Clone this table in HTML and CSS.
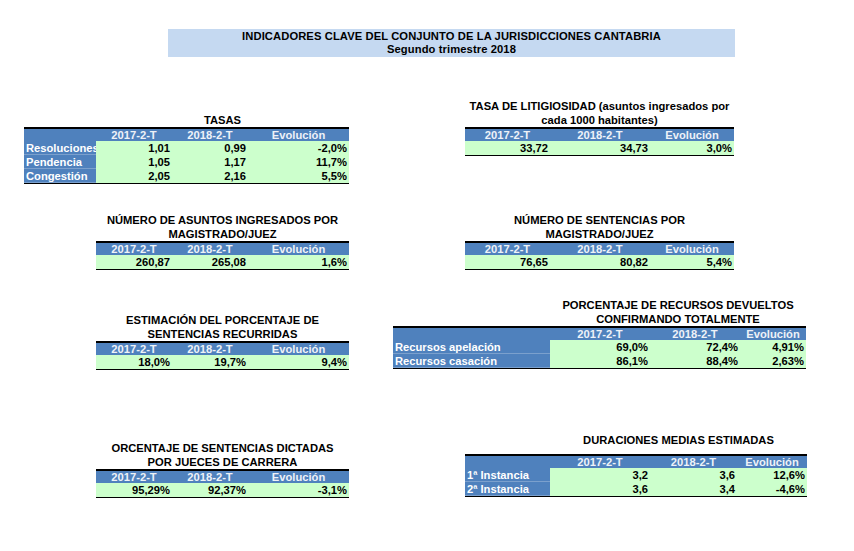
FILE: index.html
```html
<!DOCTYPE html>
<html lang="es">
<head>
<meta charset="utf-8">
<title>Indicadores clave Cantabria</title>
<link rel="stylesheet" href="styles.css">
</head>
<body>
<div class="page">
  <div class="banner">
    <div>INDICADORES CLAVE DEL CONJUNTO DE LA JURISDICCIONES CANTABRIA</div>
    <div>Segundo trimestre 2018</div>
  </div>

  <div class="sec sec-a">
    <div class="panel left-wide mt-tasas">
      <div class="title with-label-72">TASAS</div>
      <table class="grid w-tasas">
        <colgroup><col class="c72"><col class="c76"><col class="c76"><col class="c101"></colgroup>
        <tr><th></th><th>2017-2-T</th><th>2018-2-T</th><th>Evolución</th></tr>
        <tr><td class="lab">Resoluciones</td><td>1,01</td><td>0,99</td><td>-2,0%</td></tr>
        <tr><td class="lab">Pendencia</td><td>1,05</td><td>1,17</td><td>11,7%</td></tr>
        <tr class="last"><td class="lab">Congestión</td><td>2,05</td><td>2,16</td><td>5,5%</td></tr>
      </table>
    </div>
    <div class="panel right-std mt-litig">
      <div class="title">TASA DE LITIGIOSIDAD (asuntos ingresados por<br>cada 1000 habitantes)</div>
      <table class="grid w-right">
        <colgroup><col class="c85"><col class="c100"><col class="c84"></colgroup>
        <tr><th>2017-2-T</th><th>2018-2-T</th><th>Evolución</th></tr>
        <tr class="last"><td>33,72</td><td>34,73</td><td>3,0%</td></tr>
      </table>
    </div>
  </div>

  <div class="sec sec-b">
    <div class="panel left-std mt-b">
      <div class="title">NÚMERO DE ASUNTOS INGRESADOS POR<br>MAGISTRADO/JUEZ</div>
      <table class="grid w-left">
        <colgroup><col class="c76"><col class="c76"><col class="c101"></colgroup>
        <tr><th>2017-2-T</th><th>2018-2-T</th><th>Evolución</th></tr>
        <tr class="last"><td>260,87</td><td>265,08</td><td>1,6%</td></tr>
      </table>
    </div>
    <div class="panel right-std mt-b">
      <div class="title">NÚMERO DE SENTENCIAS POR<br>MAGISTRADO/JUEZ</div>
      <table class="grid w-right">
        <colgroup><col class="c85"><col class="c100"><col class="c84"></colgroup>
        <tr><th>2017-2-T</th><th>2018-2-T</th><th>Evolución</th></tr>
        <tr class="last"><td>76,65</td><td>80,82</td><td>5,4%</td></tr>
      </table>
    </div>
  </div>

  <div class="sec sec-c">
    <div class="panel left-std mt-estim">
      <div class="title">ESTIMACIÓN DEL PORCENTAJE DE<br>SENTENCIAS RECURRIDAS</div>
      <table class="grid w-left">
        <colgroup><col class="c76"><col class="c76"><col class="c101"></colgroup>
        <tr><th>2017-2-T</th><th>2018-2-T</th><th>Evolución</th></tr>
        <tr class="last"><td>18,0%</td><td>19,7%</td><td>9,4%</td></tr>
      </table>
    </div>
    <div class="panel right-wide mt-recursos">
      <div class="title with-label-157">PORCENTAJE DE RECURSOS DEVUELTOS<br>CONFIRMANDO TOTALMENTE</div>
      <table class="grid w-recursos">
        <colgroup><col class="c157"><col class="c100"><col class="c90"><col class="c66"></colgroup>
        <tr><th></th><th>2017-2-T</th><th>2018-2-T</th><th>Evolución</th></tr>
        <tr><td class="lab">Recursos apelación</td><td>69,0%</td><td>72,4%</td><td>4,91%</td></tr>
        <tr class="last"><td class="lab">Recursos casación</td><td>86,1%</td><td>88,4%</td><td>2,63%</td></tr>
      </table>
    </div>
  </div>

  <div class="sec sec-d">
    <div class="panel left-std mt-orc">
      <div class="title">ORCENTAJE DE SENTENCIAS DICTADAS<br>POR JUECES DE CARRERA</div>
      <table class="grid w-left">
        <colgroup><col class="c76"><col class="c76"><col class="c101"></colgroup>
        <tr><th>2017-2-T</th><th>2018-2-T</th><th>Evolución</th></tr>
        <tr class="last"><td>95,29%</td><td>92,37%</td><td>-3,1%</td></tr>
      </table>
    </div>
    <div class="panel right-std mt-dur">
      <div class="title with-label-85 gap-below">DURACIONES MEDIAS ESTIMADAS</div>
      <table class="grid w-dur">
        <colgroup><col class="c85"><col class="c100"><col class="c87"><col class="c70"></colgroup>
        <tr><th></th><th>2017-2-T</th><th>2018-2-T</th><th>Evolución</th></tr>
        <tr><td class="lab">1ª Instancia</td><td>3,2</td><td>3,6</td><td>12,6%</td></tr>
        <tr class="last"><td class="lab">2ª Instancia</td><td>3,6</td><td>3,4</td><td>-4,6%</td></tr>
      </table>
    </div>
  </div>
</div>
</body>
</html>
```

FILE: styles.css
```css
html, body {
  margin: 0;
  padding: 0;
  background: #ffffff;
}

body {
  font-family: "Liberation Sans", Arial, sans-serif;
  font-weight: bold;
  font-size: 11.2px;
  color: #000;
}

.page {
  width: 854px;
  height: 551px;
  overflow: hidden;
}

.banner {
  margin: 29px 0 0 168px;
  width: 567px;
  height: 28px;
  box-sizing: border-box;
  padding-top: 1px;
  background: #c5d9f1;
  text-align: center;
  line-height: 13px;
  letter-spacing: 0.1px;
}

.sec {
  display: grid;
  grid-template-columns: 380px 474px;
  align-items: start;
  justify-items: start;
}

.panel {
  display: flex;
  flex-direction: column;
  align-items: stretch;
}

.left-wide { margin-left: 24px; }
.left-std { margin-left: 96px; }
.right-std { margin-left: 85px; }
.right-wide { margin-left: 13px; }

.mt-tasas { margin-top: 56px; }
.mt-litig { margin-top: 42px; }
.mt-b { margin-top: 29px; }
.mt-estim { margin-top: 43px; }
.mt-recursos { margin-top: 28px; }
.mt-orc { margin-top: 71px; }
.mt-dur { margin-top: 63px; }

.title {
  text-align: center;
  line-height: 14px;
  white-space: nowrap;
}
.with-label-72 { padding-left: 72px; }
.with-label-157 { padding-left: 157px; }
.with-label-85 { padding-left: 85px; }
.gap-below { margin-bottom: 7px; }

.grid {
  border-collapse: separate;
  border-spacing: 0;
  table-layout: fixed;
}
.w-tasas { width: 325px; }
.w-left { width: 253px; }
.w-right { width: 269px; }
.w-recursos { width: 413px; }
.w-dur { width: 342px; }

.c72 { width: 72px; }
.c76 { width: 76px; }
.c101 { width: 101px; }
.c85 { width: 85px; }
.c100 { width: 100px; }
.c84 { width: 84px; }
.c157 { width: 157px; }
.c90 { width: 90px; }
.c66 { width: 66px; }
.c87 { width: 87px; }
.c70 { width: 70px; }

.grid th {
  background: #4f81bd;
  color: #eef2f8;
  border-top: 2px solid #000;
  line-height: 12px;
  padding: 0;
  text-align: center;
  font-weight: bold;
  white-space: nowrap;
  overflow: hidden;
}

.grid td {
  background: #ccffcc;
  line-height: 14px;
  padding: 0 2px 0 0;
  text-align: right;
  white-space: nowrap;
  overflow: hidden;
}

.grid td.lab {
  background: #4f81bd;
  color: #ffffff;
  text-align: left;
  padding: 0 0 0 2px;
  text-overflow: clip;
  box-shadow: inset 0 -1px 0 rgba(255, 255, 255, 0.25);
}

.grid tr.last td {
  border-bottom: 1px solid #000;
}
```
